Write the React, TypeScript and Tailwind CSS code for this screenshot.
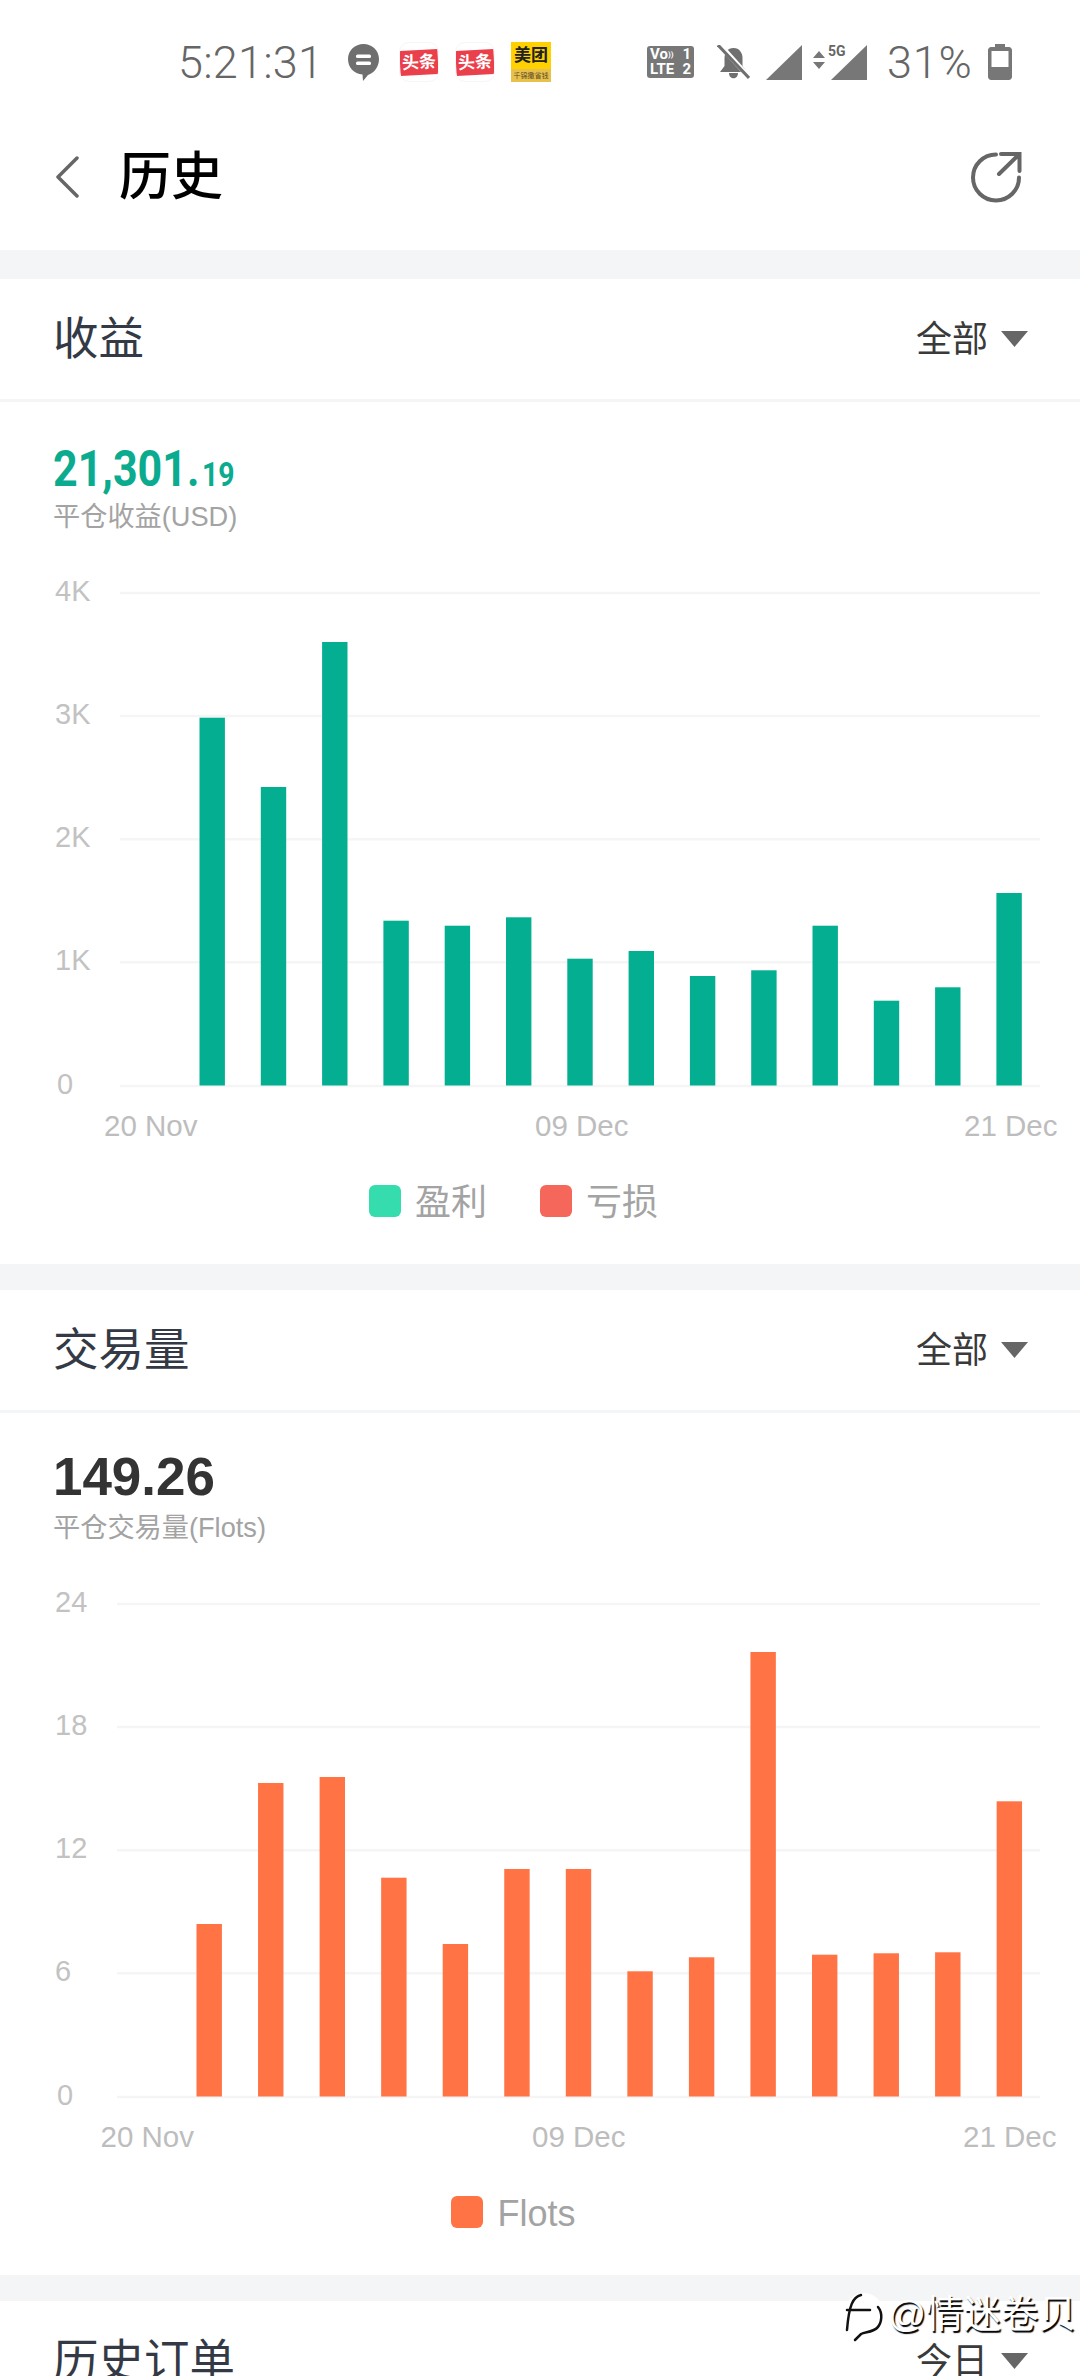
import React from "react";

const tops1 = [717.7, 787, 642, 920.7, 925.7, 917.3, 958.7, 951, 976, 970.3, 925.7, 1000.7, 987.3, 893];
const tops2 = [1924, 1783, 1777, 1877.7, 1944, 1869, 1869, 1971.3, 1957.3, 1652, 1954.7, 1953.3, 1952.3, 1801.3];

const CJK = "[font-family:'Liberation_Sans','Noto_Sans_CJK_SC',sans-serif]";

type ChartProps = {
  tops: number[];
  origin: number;
  color: string;
  ticks: string[];
  gridStart: number;
  firstBar: number;
  step: number;
  xLabels: [string, number][];
};

function Chart({ tops, origin, color, ticks, gridStart, firstBar, step, xLabels }: ChartProps) {
  const gridYs = [593, 716, 839.3, 962.3, 1086].map((y) => y - 542);
  const base = 1085.5 - 542;
  return (
    <svg width="1080" height="620" viewBox="0 0 1080 620" className="block">
      {gridYs.map((y) => (
        <line key={y} x1={gridStart} x2="1040" y1={y} y2={y} stroke="#f5f5f6" strokeWidth="2.5" />
      ))}
      {tops.map((t, i) => {
        const y = t - origin;
        return <rect key={i} x={firstBar + step * i} y={y} width="25.4" height={base - y} fill={color} />;
      })}
      {ticks.map((t, i) => (
        <text key={t} x={t === "0" ? 57 : 55} y={gridYs[i] + 8} className="text-[29px] fill-[#c2c2c2]">
          {t}
        </text>
      ))}
      {xLabels.map(([t, x]) => (
        <text key={t} x={x} y={594} className="text-[29.5px] fill-[#bdbdbd]">
          {t}
        </text>
      ))}
    </svg>
  );
}

function Caret() {
  return (
    <svg width="27" height="16" viewBox="0 0 27 16" className="ml-[13px]">
      <path d="M0 0H27L13.5 16Z" fill="#666666" />
    </svg>
  );
}

function CardHeader({ title, filter }: { title: string; filter: string }) {
  return (
    <div className="h-[123px] flex items-center justify-between pl-[53px] pr-[52px] border-b-[3px] border-[#f4f5f6] box-border">
      <span className="text-[45.5px] leading-none text-[#333a45] mt-[2px]">{title}</span>
      <span className="flex items-center">
        <span className="text-[36px] leading-none text-[#3a3a3a] mt-[1px]">{filter}</span>
        <Caret />
      </span>
    </div>
  );
}

function Legend({ items }: { items: [string, string][] }) {
  return (
    <div className="flex justify-center items-center gap-[53px] h-[32px] mt-[23px] mb-[47px] pr-[53px]">
      {items.map(([label, bg]) => (
        <div key={label} className="flex items-center gap-[14px]">
          <span className={`w-[32px] h-[32px] rounded-[6px] ${bg}`} />
          <span className="text-[36px] leading-none text-[#a3a3a3] pt-[3px]">{label}</span>
        </div>
      ))}
    </div>
  );
}

function Toutiao() {
  return (
    <div className="w-[40px] h-[40px] rounded-[10px] bg-white flex items-center justify-center border border-[#f6f6f6] overflow-hidden">
      <div className="w-[40px] h-[25px] bg-[#e9404b] -rotate-[3deg] flex items-center justify-center text-white text-[17px] font-bold leading-none whitespace-nowrap">
        头条
      </div>
    </div>
  );
}

function StatusBar() {
  return (
    <div className="h-[72px] flex items-start pl-[178px] pr-[68px] text-[#666666]">
      <div className="flex items-center mt-[42px] w-full h-[40px]">
        <span className="text-[45px] leading-none font-light [font-family:Roboto,sans-serif] tracking-[0.2px] w-[170px]">5:21:31</span>
        <svg width="31" height="37" viewBox="0 0 31 37" className="mr-[20px]">
          <path d="M15.5 0C24 0 31 6.5 31 15C31 23 26 29 20 31L15 37L14.5 30.5C6 30 0 23.5 0 15C0 6.5 7 0 15.5 0Z" fill="#6f6f6f" />
          <rect x="8" y="10.5" width="15" height="3.5" rx="1.5" fill="#fff" />
          <rect x="8" y="17.5" width="15" height="3.5" rx="1.5" fill="#fff" />
        </svg>
        <Toutiao />
        <div className="w-[16px]" />
        <Toutiao />
        <div className="w-[16px]" />
        <div className="w-[40px] h-[40px] bg-[#ffd100] flex flex-col items-center overflow-hidden">
          <div className="h-[27px] text-[17px] font-bold leading-[27px] text-[#222] whitespace-nowrap">美团</div>
          <div className="w-full h-[13px] bg-[#e8c04c] text-[7px] leading-[13px] text-center text-[#5a4a20] whitespace-nowrap">千锦撒省钱</div>
        </div>
        <div className="w-[96px]" />
        <div className="w-[47px] h-[32px] rounded-[3px] bg-[#777777] text-white font-bold text-[15px] leading-[15px] flex flex-col justify-center px-[3px] [font-family:Roboto,sans-serif]">
          <div className="flex justify-between"><span>Vo<span className="text-[8px] align-top">))</span></span><span>1</span></div>
          <div className="flex justify-between"><span>LTE</span><span>2</span></div>
        </div>
        <svg width="33" height="34" viewBox="0 0 33 34" className="ml-[23px]">
          <path d="M16.5 3C10.5 3 7.5 8 7.5 13V21L3 27H30L25.5 21V13C25.5 8 22.5 3 16.5 3Z" fill="#6f6f6f" />
          <path d="M12 28H21C21 35 12 35 12 28Z" fill="#6f6f6f" />
          <path d="M3 0L32 32" stroke="#ffffff" strokeWidth="5" />
          <path d="M1 0L32 33" stroke="#6f6f6f" strokeWidth="3" />
        </svg>
        <svg width="36" height="35" viewBox="0 0 36 35" className="ml-[16px]">
          <path d="M36 0V35H0Z" fill="#777777" />
        </svg>
        <div className="relative w-[54px] h-[35px] ml-[11px]">
          <svg width="54" height="35" viewBox="0 0 54 35" className="absolute inset-0">
            <path d="M54 0V35H18Z" fill="#777777" />
            <path d="M0 13L6 6L12 13ZM0 17L12 17L6 24Z" fill="#777777" />
          </svg>
          <span className="absolute left-[15px] top-[-1px] text-[14px] leading-[15px] font-bold text-[#666] bg-white [font-family:Roboto,sans-serif]">5G</span>
        </div>
        <span className="ml-[20px] text-[45px] leading-none font-light [font-family:Roboto,sans-serif] tracking-[0.8px]">31%</span>
        <svg width="24" height="36" viewBox="0 0 24 36" className="ml-auto">
          <path d="M7 0H17V3H21C22.5 3 24 4.5 24 6V33C24 34.5 22.5 36 21 36H3C1.5 36 0 34.5 0 33V6C0 4.5 1.5 3 3 3H7Z" fill="#777777" />
          <rect x="3.5" y="7" width="17" height="16" fill="#ffffff" />
        </svg>
      </div>
    </div>
  );
}

export default function App() {
  return (
    <div className={`relative w-[1080px] h-[2376px] overflow-hidden bg-white ${CJK}`}>
      <StatusBar />
      <div className="h-[178px] flex items-center pl-[55px] pr-[57px] pt-[32px] box-border">
        <svg width="24" height="42" viewBox="0 0 24 42" className="mb-[1px]">
          <path d="M22 2L3 21L22 40" fill="none" stroke="#666666" strokeWidth="3.5" strokeLinecap="round" strokeLinejoin="round" />
        </svg>
        <span className="ml-[40px] text-[52px] leading-none font-medium text-black">历史</span>
        <svg width="52" height="52" viewBox="0 0 52 52" className="ml-auto">
          <path d="M25 3.5A23 23 0 1 0 48 26.5" fill="none" stroke="#666666" strokeWidth="4" strokeLinecap="round" />
          <path d="M30 3H48.5V20M48 3.5L28 23" fill="none" stroke="#666666" strokeWidth="4" strokeLinecap="round" />
        </svg>
      </div>

      <div className="h-[29px] bg-[#f4f5f7]" />
      <section>
        <CardHeader title="收益" filter="全部" />
        <div className="h-[140px] pl-[53px] pt-[38px] box-border">
          <div className="h-[58px] flex items-baseline font-bold text-[#0aab8e] [font-family:Roboto,sans-serif] leading-[58px] origin-left scale-x-[0.86]">
            <span className="text-[50px]">21,301.</span>
            <span className="text-[33px] ml-[3px]">19</span>
          </div>
          <div className="text-[27.2px] leading-[34px] mt-[2px] text-[#a3a3a3]">平仓收益(USD)</div>
        </div>
        <Chart
          tops={tops1}
          origin={542}
          color="#03ae91"
          ticks={["4K", "3K", "2K", "1K", "0"]}
          gridStart={120}
          firstBar={199.5}
          step={61.3}
          xLabels={[["20 Nov", 104], ["09 Dec", 535], ["21 Dec", 964]]}
        />
        <Legend items={[["盈利", "bg-[#35dcae]"], ["亏损", "bg-[#f5665b]"]]} />
      </section>

      <div className="h-[26px] bg-[#f4f5f7]" />
      <section>
        <CardHeader title="交易量" filter="全部" />
        <div className="h-[140px] pl-[53px] pt-[34px] box-border">
          <div className="h-[62px] flex items-baseline font-bold text-[#333333] leading-[58px] origin-left scale-x-[0.98]">
            <span className="text-[54px]">149.26</span>
          </div>
          <div className="text-[27.2px] leading-[34px] mt-[2px] text-[#a3a3a3]">平仓交易量(Flots)</div>
        </div>
        <Chart
          tops={tops2}
          origin={1553}
          color="#ff7344"
          ticks={["24", "18", "12", "6", "0"]}
          gridStart={117}
          firstBar={196.5}
          step={61.55}
          xLabels={[["20 Nov", 100.5], ["09 Dec", 532], ["21 Dec", 963]]}
        />
        <Legend items={[["Flots", "bg-[#ff7344]"]]} />
      </section>

      <div className="h-[26px] bg-[#f4f5f7]" />
      <section>
        <CardHeader title="历史订单" filter="今日" />
      </section>

      <div className="absolute left-[845px] top-[2293px] flex items-start">
        <svg width="40" height="50" viewBox="0 0 40 50">
          <circle cx="19" cy="19" r="19" fill="#ffffff" />
          <path d="M16 2C8 4 4 12 2 37M2 17H25M33 14C38 20 37 30 32 35C28 39 20 39 16 41L10 47" fill="none" stroke="#111111" strokeWidth="2.5" strokeLinecap="round" />
        </svg>
        <span className="ml-[3px] text-[37.5px] leading-[42px] text-white whitespace-nowrap [text-shadow:1.5px_1.5px_1px_#000]">@情迷卷贝</span>
      </div>
    </div>
  );
}
